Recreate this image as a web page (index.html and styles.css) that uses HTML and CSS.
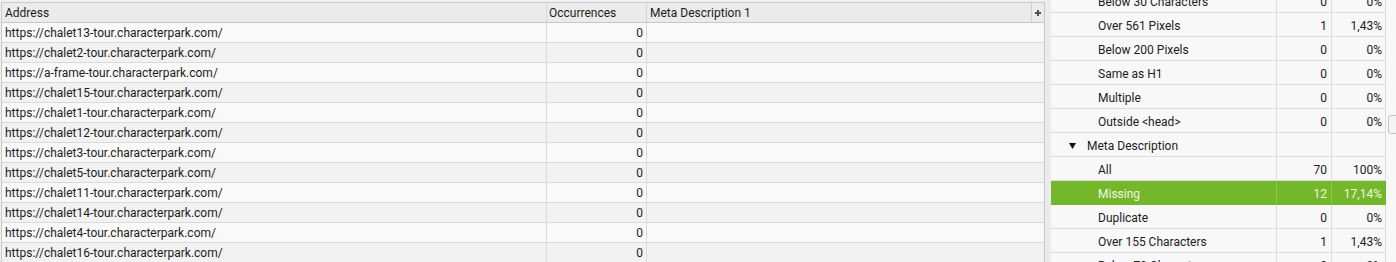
FILE: index.html
```html
<!DOCTYPE html>
<html>
<head>
  <meta charset="UTF-8">
  <title>Meta Description</title>
  <link rel="stylesheet" href="styles.css">
</head>
<body>
  <div class="app">
    <!-- Left: URL grid -->
    <div class="grid-pane">
      <div class="grid">
        <div class="grid-head">
          <div class="hcell col-address">Address</div>
          <div class="hcell col-occ">Occurrences</div>
          <div class="hcell col-meta">Meta Description 1</div>
          <div class="hcell col-add">
            <svg width="6" height="6" viewBox="0 0 6 6"><rect x="2" y="0" width="2" height="6" fill="#505050"/><rect x="0" y="2" width="6" height="2" fill="#505050"/></svg>
          </div>
        </div>
        <div class="grid-row"><div class="cell">https://chalet13-tour.characterpark.com/</div><div class="cell num">0</div><div class="cell"></div></div>
        <div class="grid-row"><div class="cell">https://chalet2-tour.characterpark.com/</div><div class="cell num">0</div><div class="cell"></div></div>
        <div class="grid-row"><div class="cell">https://a-frame-tour.characterpark.com/</div><div class="cell num">0</div><div class="cell"></div></div>
        <div class="grid-row"><div class="cell">https://chalet15-tour.characterpark.com/</div><div class="cell num">0</div><div class="cell"></div></div>
        <div class="grid-row"><div class="cell">https://chalet1-tour.characterpark.com/</div><div class="cell num">0</div><div class="cell"></div></div>
        <div class="grid-row"><div class="cell">https://chalet12-tour.characterpark.com/</div><div class="cell num">0</div><div class="cell"></div></div>
        <div class="grid-row"><div class="cell">https://chalet3-tour.characterpark.com/</div><div class="cell num">0</div><div class="cell"></div></div>
        <div class="grid-row"><div class="cell">https://chalet5-tour.characterpark.com/</div><div class="cell num">0</div><div class="cell"></div></div>
        <div class="grid-row"><div class="cell">https://chalet11-tour.characterpark.com/</div><div class="cell num">0</div><div class="cell"></div></div>
        <div class="grid-row"><div class="cell">https://chalet14-tour.characterpark.com/</div><div class="cell num">0</div><div class="cell"></div></div>
        <div class="grid-row"><div class="cell">https://chalet4-tour.characterpark.com/</div><div class="cell num">0</div><div class="cell"></div></div>
        <div class="grid-row"><div class="cell">https://chalet16-tour.characterpark.com/</div><div class="cell num">0</div><div class="cell"></div></div>
      </div>
    </div>

    <div class="splitter"></div>

    <!-- Right: overview tree -->
    <div class="overview">
      <div class="tree">
        <div class="trow"><div class="tlabel sub">Below 30 Characters</div><div class="tnum">0</div><div class="tpct">0%</div></div>
        <div class="trow"><div class="tlabel sub">Over 561 Pixels</div><div class="tnum">1</div><div class="tpct">1,43%</div></div>
        <div class="trow"><div class="tlabel sub">Below 200 Pixels</div><div class="tnum">0</div><div class="tpct">0%</div></div>
        <div class="trow"><div class="tlabel sub">Same as H1</div><div class="tnum">0</div><div class="tpct">0%</div></div>
        <div class="trow"><div class="tlabel sub">Multiple</div><div class="tnum">0</div><div class="tpct">0%</div></div>
        <div class="trow"><div class="tlabel sub">Outside &lt;head&gt;</div><div class="tnum">0</div><div class="tpct">0%</div></div>
        <div class="trow">
          <div class="tlabel group">
            <svg class="caret" width="7" height="6" viewBox="0 0 7 6"><polygon points="0,0 7,0 3.5,6" fill="#111"/></svg>
            Meta Description
          </div>
          <div class="tnum"></div><div class="tpct"></div>
        </div>
        <div class="trow"><div class="tlabel sub">All</div><div class="tnum">70</div><div class="tpct">100%</div></div>
        <div class="trow selected"><div class="tlabel sub">Missing</div><div class="tnum">12</div><div class="tpct">17,14%</div></div>
        <div class="trow"><div class="tlabel sub">Duplicate</div><div class="tnum">0</div><div class="tpct">0%</div></div>
        <div class="trow"><div class="tlabel sub">Over 155 Characters</div><div class="tnum">1</div><div class="tpct">1,43%</div></div>
        <div class="trow"><div class="tlabel sub">Below 70 Characters</div><div class="tnum">0</div><div class="tpct">0%</div></div>
      </div>
      <div class="scroll">
        <div class="thumb"></div>
      </div>
    </div>
  </div>
</body>
</html>
```

FILE: styles.css
```css
/* Overall */
body {
  margin: 0;
  font-family: Roboto, "Liberation Sans", Arial, sans-serif;
  font-size: 12px;
  color: #1c1c1c;
  background-color: #f0f0f0;
}
.app {
  display: flex;
  height: 262px;
  overflow: hidden;
}

/* Left grid */
.grid-pane {
  flex: 0 0 1045px;
  padding: 2px 0 0 1px;
  box-sizing: border-box;
  background-color: #f0f0f0;
}
.grid {
  border: 1px solid #c8c8c8;
  border-bottom: none;
  background-color: #f9f9f9;
}
.grid-head {
  display: flex;
  height: 19px;
  background-color: #ebebeb;
  border-bottom: 1px solid #c8c8c8;
}
.hcell {
  box-sizing: border-box;
  padding: 1px 0 0 3px;
  line-height: 19px;
  white-space: nowrap;
}
.col-address {
  width: 545px;
  border-right: 1px solid #d6d6d6;
}
.col-occ {
  width: 100px;
  padding-left: 2px;
  border-right: 1px solid #d6d6d6;
}
.col-meta {
  width: 385px;
  border-right: 1px solid #d0d0d0;
}
.col-add {
  flex: 1;
  padding: 0;
  display: flex;
  align-items: center;
  justify-content: center;
}
.grid-row {
  display: grid;
  grid-template-columns: 545px 100px 1fr;
  height: 19px;
  border-bottom: 1px solid #dadada;
  background-color: #f9f9f9;
}
.grid-row:nth-child(odd) {
  background-color: #f2f2f2;
}
.cell {
  box-sizing: border-box;
  line-height: 19px;
  padding: 1px 0 0 3px;
  white-space: nowrap;
  overflow: hidden;
  border-right: 1px solid #dadada;
}
.cell:last-child {
  border-right: none;
}
.cell.num {
  text-align: right;
  padding: 1px 3px 0 0;
}

/* Splitter */
.splitter {
  flex: 0 0 6px;
  background-color: #ebebeb;
}

/* Right overview */
.overview {
  flex: 1;
  display: flex;
  background-color: #f8f8f8;
}
.tree {
  flex: 0 0 335px;
  margin-top: -11px;
}
.trow {
  display: grid;
  grid-template-columns: 226px 55px 54px;
  height: 23px;
  border-bottom: 1px solid #dcdcdc;
  line-height: 23px;
}
.tlabel, .tnum, .tpct {
  box-sizing: border-box;
  padding-top: 2px;
  border-right: 1px solid #dcdcdc;
  white-space: nowrap;
}
.tlabel.sub {
  padding-left: 47px;
}
.tlabel.group {
  padding-left: 18px;
  display: flex;
  align-items: center;
}
.caret {
  margin: -2px 11px 0 0;
}
.tnum {
  text-align: right;
  padding-right: 4px;
}
.tpct {
  text-align: right;
  padding-right: 3px;
}
.trow.selected {
  background-color: #74b72b;
  color: #eef7e2;
  border-bottom-color: #74b72b;
}
.trow.selected .tlabel,
.trow.selected .tnum {
  border-right-color: #8fc655;
}
.trow.selected .tpct {
  border-right-color: #74b72b;
}
.scroll {
  flex: 0 0 10px;
  overflow: hidden;
  padding-top: 115px;
  background-color: #f8f8f8;
}
.thumb {
  margin-left: 2px;
  width: 14px;
  height: 17px;
  border: 1px solid #c4c4c4;
  border-radius: 3px;
  background-color: #f4f4f4;
}
```
